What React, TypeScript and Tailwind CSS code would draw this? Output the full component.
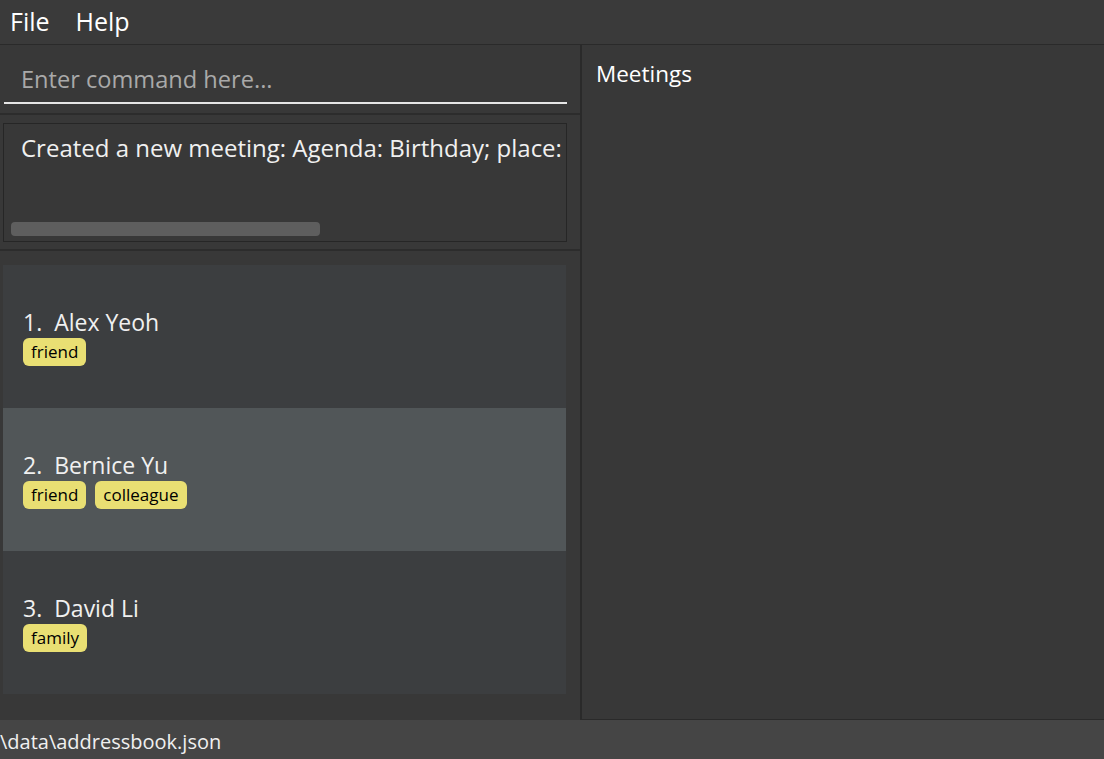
import React from "react";

const font = { fontFamily: '"Open Sans", "Noto Sans", sans-serif' };

function Tag({ t }: { t: string }) {
  return (
    <span className="inline-flex h-[28px] items-center rounded-[6px] bg-[#e9df73] px-[8px] text-[17px] leading-none text-black">
      {t}
    </span>
  );
}

function Card({ i, name, tags, selected }: { i: number; name: string; tags: string[]; selected?: boolean }) {
  return (
    <div className={`flex h-[143px] flex-col justify-center pl-[20px] ${selected ? "bg-[#515658]" : "bg-[#3c3e40]"}`}>
      <div className="text-[23px] leading-[28px] text-[#f0f0f0]">
        {i}.&nbsp; {name}
      </div>
      <div className="mt-[2px] flex gap-[9px]">
        {tags.map((t) => (
          <Tag key={t} t={t} />
        ))}
      </div>
    </div>
  );
}

export default function App() {
  return (
    <div className="flex h-[759px] w-[1104px] flex-col overflow-hidden bg-[#383838] text-white" style={font}>
      <div className="flex h-[45px] items-center gap-[26px] border-b border-[#2a2a2a] bg-[#3a3a3a] pl-[10px] text-[25px]">
        <span>File</span>
        <span>Help</span>
      </div>
      <div className="flex h-[675px]">
        <div className="flex w-[580px] flex-col">
          <div className="h-[68px] pl-[4px] pr-[13px] pt-[12px]">
            <div className="flex h-[47px] items-center border-b-2 border-[#e6e6e6] pl-[17px] text-[23.6px] text-[#a9a9a9]">
              Enter command here...
            </div>
          </div>
          <div className="h-[2px] bg-[#2c2c2c]" />
          <div className="h-[134px] pl-[3px] pr-[13px] pt-[8px]">
            <div className="relative h-[119px] overflow-hidden border border-[#262626] bg-[#383838]">
              <div className="whitespace-nowrap pl-[17px] pt-[7px] text-[24px] leading-[34px] text-[#f0f0f0]">
                Created a new meeting: Agenda: Birthday; place:
              </div>
              <div className="absolute left-[7px] top-[98px] h-[14px] w-[309px] rounded-[4px] bg-[#5e5e5e]" />
            </div>
          </div>
          <div className="h-[2px] bg-[#2c2c2c]" />
          <div className="flex-1 pl-[3px] pr-[14px] pt-[14px]">
            <Card i={1} name="Alex Yeoh" tags={["friend"]} />
            <Card i={2} name="Bernice Yu" tags={["friend", "colleague"]} selected />
            <Card i={3} name="David Li" tags={["family"]} />
          </div>
        </div>
        <div className="w-[2px] bg-[#2a2a2a]" />
        <div className="flex-1 border-b border-[#2a2a2a] pl-[14px] pt-[14px]">
          <div className="text-[22.5px] leading-[30px] text-white">Meetings</div>
        </div>
      </div>
      <div className="flex flex-1 items-center bg-[#454545] pt-[4px] text-[20px] text-[#f0f0f0]">
        \data\addressbook.json
      </div>
    </div>
  );
}
